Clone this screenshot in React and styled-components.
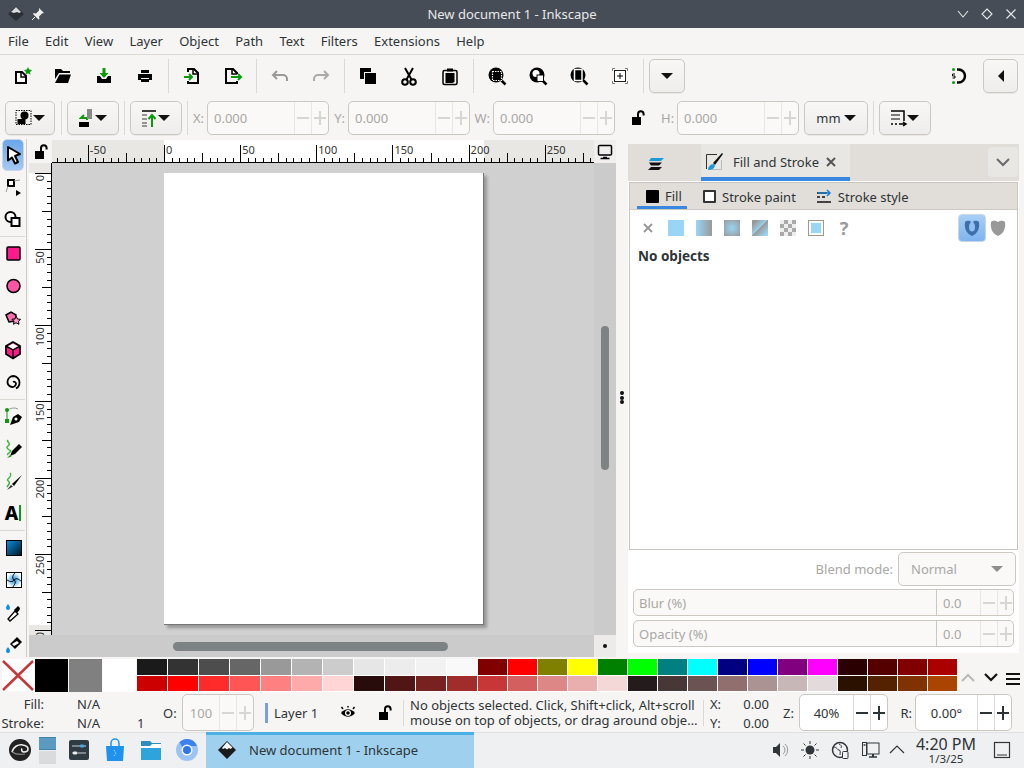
import React from "react";
import styled, { createGlobalStyle } from "styled-components";

const Global = createGlobalStyle`
  html, body { margin: 0; padding: 0; background: #f6f5f4; }
  body { font-family: "Noto Sans", sans-serif; font-size: 13px; color: #2e3436; overflow: hidden; }
  * { box-sizing: border-box; }
`;

const Page = styled.div`
  width: 1024px;
  height: 768px;
  display: flex;
  flex-direction: column;
  overflow: hidden;
`;

// window chrome
const TitleBar = styled.div`
  height: 28px;
  flex: none;
  background: #474d56;
  color: #e6e8ea;
  display: flex;
  align-items: center;
  padding: 0 6px;
`;
const TitleText = styled.div`
  flex: 1;
  text-align: center;
  padding-bottom: 1px;
`;
const TitleSide = styled.div`
  display: flex;
  align-items: center;
  gap: ${(p) => p.$gap || 4}px;
  width: 60px;
  justify-content: ${(p) => p.$end ? "flex-end" : "flex-start"};
`;

const MenuBar = styled.div`
  height: 27px;
  flex: none;
  display: flex;
  align-items: center;
  gap: 16.3px;
  padding: 1px 0 2px 8px;
  border-bottom: 1px solid #dcd9d5;
`;

const CmdBar = styled.div`
  height: 42px;
  flex: none;
  display: flex;
  align-items: center;
  padding: 0 6px 0 1.5px;
`;
const ToolBtn = styled.div`
  width: 41px;
  height: 34px;
  flex: none;
  display: flex;
  align-items: center;
  justify-content: center;
  margin-right: ${(p) => p.$mr || 0}px;
`;
const Sep = styled.div`
  width: 1px;
  height: 34px;
  flex: none;
  background: #dcd9d5;
  margin: 0 ${(p) => p.$m ?? 2.5}px;
`;
const Spacer = styled.div`
  flex: 1;
`;
const RaisedBtn = styled.div`
  width: ${(p) => p.$w}px;
  height: 34px;
  flex: none;
  display: flex;
  align-items: center;
  justify-content: center;
  gap: ${(p) => p.$gap ?? 4}px;
  margin-left: ${(p) => p.$ml || 0}px;
  border: 1px solid #cdc7c2;
  border-radius: 5px;
  background: linear-gradient(#f8f7f6, #efedeb);
  box-shadow: 0 1px 0 rgba(0, 0, 0, 0.05);
`;
const Caret = styled.div`
  width: 0;
  height: 0;
  flex: none;
  margin-left: ${(p) => p.$ml || 0}px;
  border-left: 6px solid transparent;
  border-right: 6px solid transparent;
  border-top: 6px solid ${(p) => p.$c || "#111"};
`;
const CaretLeft = styled.div`
  width: 0;
  height: 0;
  border-top: 6px solid transparent;
  border-bottom: 6px solid transparent;
  border-right: 6px solid #111;
`;

const ControlBar = styled.div`
  height: 42px;
  flex: none;
  display: flex;
  align-items: center;
  padding: 0 0 1px 5px;
`;
const FieldLabel = styled.div`
  flex: none;
  width: ${(p) => p.$w}px;
  color: ${(p) => p.$c || "#a9a7a4"};
  text-align: ${(p) => p.$right ? "right" : "left"};
  padding-right: ${(p) => p.$right ? 3 : 0}px;
`;
const Spin = styled.div`
  width: ${(p) => p.$w || 122}px;
  height: ${(p) => p.$h || 34}px;
  flex: none;
  display: flex;
  align-items: stretch;
  border: 1px solid #cdc7c2;
  border-radius: 5px;
  background: ${(p) => p.$on ? "#fff" : "#faf9f8"};
  color: ${(p) => p.$on ? "#2e3436" : "#a9a7a4"};
`;
const SpinValue = styled.div`
  flex: 1;
  display: flex;
  align-items: center;
  justify-content: ${(p) => p.$center ? "center" : "flex-start"};
  padding-left: ${(p) => p.$center ? 0 : 6}px;
`;
const SpinStep = styled.div`
  width: 17px;
  flex: none;
  position: relative;
  border-left: 1px solid ${(p) => p.$on ? "#dcd9d5" : "#e8e6e3"};
  &::before {
    content: "";
    position: absolute;
    left: 2px;
    right: 2px;
    top: calc(50% - 1px);
    height: 2px;
    background: ${(p) => p.$on ? "#2e3436" : "#d8d6d3"};
  }
  ${(p) => p.$plus && `
    &::after {
      content: "";
      position: absolute;
      top: calc(50% - 7px);
      bottom: calc(50% - 7px);
      left: calc(50% - 1px);
      width: 2px;
      background: ${p.$on ? "#2e3436" : "#d8d6d3"};
    }
  `}
`;
const LockSlot = styled.div`
  width: 46px;
  flex: none;
  display: flex;
  justify-content: center;
`;

// main area
const Main = styled.div`
  height: 518px;
  flex: none;
  display: flex;
  align-items: stretch;
`;
const Toolbox = styled.div`
  width: 27px;
  flex: none;
  border-right: 1px solid #cdc9c4;
  display: flex;
  flex-direction: column;
  overflow: hidden;
  padding-right: 1px;
`;
const BoxBtn = styled.div`
  height: 32px;
  flex: none;
  margin: 0 1px 0 2px;
  display: flex;
  align-items: center;
  justify-content: center;
  border-radius: 5px;
  ${(p) => p.$on && `
    background: linear-gradient(#6aa7ea, #a6c9f2);
    border: 1px solid #c9d6e4;
  `}
`;
const BoxSep = styled.div`
  height: 1px;
  margin: 1px 0;
  flex: none;
  background: #dcd9d5;
`;
const CanvasGrid = styled.div`
  width: 587px;
  flex: none;
  margin: 1px 0 0 2px;
  display: grid;
  grid-template-columns: 23px 542px 22px;
  grid-template-rows: 23px 472px 22px;
`;
const Corner = styled.div`
  background: ${(p) => p.$bg || "#f5f4f3"};
  display: flex;
  align-items: center;
  justify-content: center;
`;
const Ruler = styled.svg`
  display: block;
`;
const Canvas = styled.div`
  background: #d0d0d0;
  padding: 10px 0 0 112px;
  overflow: hidden;
`;
const Sheet = styled.div`
  width: 320px;
  height: 452px;
  background: #fff;
  border-right: 1px solid #777;
  border-bottom: 1px solid #777;
  box-shadow: 3px 3px 3px rgba(0, 0, 0, 0.28);
`;
const VScroll = styled.div`
  background: #cbcbcb;
  padding: 163px 0 0 7px;
`;
const VThumb = styled.div`
  width: 8px;
  height: 144px;
  border-radius: 4px;
  background: #7d8282;
`;
const HScroll = styled.div`
  grid-column: 1 / 3;
  background: #cbcbcb;
  padding: 7px 0 0 144px;
`;
const HThumb = styled.div`
  width: 275px;
  height: 9px;
  border-radius: 5px;
  background: #7d8282;
`;
const Dot = styled.div`
  width: 4px;
  height: 4px;
  border-radius: 50%;
  background: #111;
`;
const Handle = styled.div`
  width: 12px;
  flex: none;
  display: flex;
  flex-direction: column;
  align-items: center;
  justify-content: flex-start;
  gap: 0.5px;
  padding-top: 252px;
`;

// dialog panel
const Panel = styled.div`
  width: 391px;
  flex: none;
  margin-top: 5px;
  height: 509px;
  background: #fff;
  display: flex;
  flex-direction: column;
`;
const DockTabs = styled.div`
  height: 37px;
  flex: none;
  background: #e1ded9;
  display: flex;
  align-items: stretch;
`;
const DockTab = styled.div`
  width: ${(p) => p.$w}px;
  flex: none;
  display: flex;
  align-items: center;
  gap: 7px;
  white-space: nowrap;
  padding-left: ${(p) => p.$active ? 1 : 16}px;
  ${(p) => p.$active && `
    background: #e9e7e4;
    border-bottom: 4px solid #3a87e0;
    padding-top: 2px;
  `}
`;
const TabClose = styled.div`
  margin-left: -1px;
  display: flex;
`;
const DockMenu = styled.div`
  width: 30px;
  height: 30px;
  margin: 3px 1px 0 auto;
  border-radius: 4px;
  background: #e9e7e4;
  display: flex;
  align-items: center;
  justify-content: center;
`;
const Frame = styled.div`
  height: 368px;
  flex: none;
  margin: 1px 1px 0 1px;
  border: 1px solid #c9c5be;
  display: flex;
  flex-direction: column;
`;
const SubTabs = styled.div`
  height: 27px;
  flex: none;
  background: #e1ded9;
  border-bottom: 1px solid #cdc9c3;
  display: flex;
  align-items: stretch;
  padding-left: 7px;
  gap: 16px;
`;
const SubTab = styled.div`
  display: flex;
  align-items: center;
  gap: 6px;
  padding: 1px 0 0 ${(p) => p.$pad || 0}px;
  width: ${(p) => p.$w || "auto"};
  ${(p) => p.$active && "border-bottom: 3px solid #3a87e0; padding-top: 3px;"}
`;
const ColorChip = styled.div`
  width: 13px;
  height: 13px;
  flex: none;
  background: ${(p) => p.$fill ? "#000" : "#fff"};
  border: ${(p) => p.$fill ? "0" : "2px solid #333"};
  border-radius: 1px;
`;
const PaintRow = styled.div`
  height: 35px;
  flex: none;
  display: flex;
  align-items: center;
  padding: 1px 7px 0 9px;
`;
const PaintSlot = styled.div`
  width: 28px;
  height: 16px;
  flex: none;
  display: flex;
  align-items: center;
  justify-content: center;
  color: #999;
  font-weight: 700;
  font-size: 18px;
`;
const NoneSlot = styled.div`
  width: 23px;
  flex: none;
  padding-left: 3px;
`;
const PaintChip = styled.div`
  width: 16px;
  height: 16px;
  background: ${(p) => p.$bg};
  ${(p) => p.$framed && "border: 1px solid #999; box-shadow: inset 0 0 0 2px #fff;"}
`;
const RuleBtn = styled.div`
  width: 28px;
  height: 28px;
  flex: none;
  margin-left: auto;
  border-radius: 4px;
  border: 1px solid #c9d6e4;
  background: linear-gradient(#a8cff6, #7eb4ee);
  display: flex;
  align-items: center;
  justify-content: center;
`;
const RuleSlot = styled.div`
  width: 24px;
  flex: none;
  display: flex;
  justify-content: flex-end;
`;
const NoObjects = styled.div`
  font-weight: 700;
  font-size: 13.5px;
  padding: 2px 0 0 8px;
`;
const BlendRow = styled.div`
  height: 34px;
  flex: none;
  margin-top: 2px;
  display: flex;
  align-items: center;
  justify-content: flex-end;
  gap: 5px;
  padding-right: 3px;
  color: #a9a7a4;
`;
const Select = styled.div`
  width: 118px;
  height: 34px;
  border: 1px solid #cdc7c2;
  border-radius: 5px;
  background: #faf9f8;
  display: flex;
  align-items: center;
  justify-content: space-between;
  padding: 0 12px;
`;
const SliderRow = styled.div`
  height: 27px;
  flex: none;
  margin: ${(p) => p.$first ? 3 : 4}px 5px 0 5px;
  border: 1px solid #cdc7c2;
  border-radius: 5px;
  background: #faf9f8;
  display: flex;
  color: #a9a7a4;
`;
const SliderName = styled.div`
  width: 303px;
  flex: none;
  border-right: 1px solid #cdc7c2;
  display: flex;
  align-items: center;
  padding-left: 5px;
`;
const SliderValue = styled.div`
  width: 43px;
  flex: none;
  display: flex;
  align-items: center;
  padding-left: 6px;
`;

// palette
const PaletteBar = styled.div`
  height: 35px;
  flex: none;
  display: flex;
  padding: 2px 0 0 2px;
`;
const BigSwatch = styled.div`
  width: ${(p) => p.$w}px;
  height: 33px;
  flex: none;
  background: ${(p) => p.$c};
  margin-left: ${(p) => p.$ml ?? 1}px;
`;
const SwatchGrid = styled.div`
  margin-left: 1px;
  display: grid;
  grid-template-columns: repeat(11, 31px) repeat(16, 30px);
  grid-template-rows: 16.5px 16.5px;
  flex: none;
`;
const Swatch = styled.div`
  border-right: 1px solid #fff;
  border-bottom: 1px solid #fff;
  background: ${(p) => p.$c};
`;
const PaletteTools = styled.div`
  flex: 1;
  display: flex;
  align-items: center;
  padding-top: 6px;
`;
const PaletteTool = styled.div`
  width: ${(p) => p.$w}px;
  flex: none;
  display: flex;
  justify-content: center;
  margin-top: ${(p) => p.$t || 0}px;
`;

// status bar
const StatusBar = styled.div`
  height: 40px;
  flex: none;
  display: flex;
  align-items: center;
  padding-top: 1px;
  white-space: nowrap;
`;
const StyleGrid = styled.div`
  width: 163px;
  flex: none;
  margin-top: 2px;
  display: grid;
  grid-template-columns: 44px 33px 60px 1fr;
  grid-template-rows: 19px 19px;
  align-items: center;
`;
const RightText = styled.div`
  text-align: right;
`;
const LayerMark = styled.div`
  width: 3px;
  height: 20px;
  margin: 0 6px 0 11px;
  background: #7a9fd0;
  flex: none;
`;
const LayerName = styled.div`
  width: 60px;
  flex: none;
`;
const StatusIcon = styled.div`
  width: ${(p) => p.$w}px;
  flex: none;
  padding-left: ${(p) => p.$pl || 0}px;
  display: flex;
  justify-content: center;
`;
const Message = styled.div`
  width: 299px;
  flex: none;
  line-height: 15px;
  padding-left: 6px;
`;
const VLine = styled.div`
  width: 1px;
  height: 26px;
  flex: none;
  background: #dcd9d5;
`;
const Coords = styled.div`
  width: 79px;
  flex: none;
  margin-top: 2px;
  display: grid;
  grid-template-columns: 31px 28px;
  grid-template-rows: 19px 19px;
  padding-left: 6px;
  align-items: center;
`;

// task bar
const TaskBar = styled.div`
  height: 36px;
  flex: none;
  background: #eff0f1;
  border-top: 1px solid #dfe0e1;
  display: flex;
  align-items: center;
  padding-bottom: 1px;
`;
const TaskIcon = styled.div`
  width: ${(p) => p.$w || 36}px;
  flex: none;
  display: flex;
  justify-content: center;
  margin-left: ${(p) => p.$ml || 0}px;
`;
const Pager = styled.div`
  width: 17px;
  margin-right: 4px;
  flex: none;
  display: flex;
  flex-direction: column;
  gap: 1px;
`;
const PagerDesk = styled.div`
  height: 13px;
  background: ${(p) => p.$on ? "#5b9bc0" : "#d9dbdc"};
  border-top: ${(p) => p.$on ? "1px solid #3f84ad" : "0"};
  border-bottom: ${(p) => p.$on ? "1px solid #3f84ad" : "0"};
`;
const TaskItem = styled.div`
  width: 268px;
  height: 36px;
  flex: none;
  align-self: flex-start;
  margin: -1px 0 0 1px;
  background: #9fd1ee;
  border-top: 3px solid #4db0e4;
  display: flex;
  align-items: center;
  gap: 10px;
  padding: 0 0 3px 9px;
  color: #2e3436;
`;
const Clock = styled.div`
  width: 68px;
  margin-left: 2px;
  flex: none;
  display: flex;
  flex-direction: column;
  align-items: center;
  line-height: 1;
`;
const ClockTime = styled.div`
  font-size: 16px;
`;
const ClockDate = styled.div`
  font-size: 11.5px;
  margin-top: 1px;
`;

const Ic = styled.svg`
  display: block;
  flex: none;
`;
const I = ({ s = 24, children }) => (
  <Ic width={s} height={s} viewBox={`0 0 ${s} ${s}`}>{children}</Ic>
);

const G = "#0a9a0a";
const PK = "#ff1a8c";

const icons = {
  new: <I><path d="M6 8h6l4 4v7H6z" fill="#fff" stroke="#000" strokeWidth="2" /><path d="M11 8v5h5" fill="none" stroke="#000" strokeWidth="1.5" /><path d="M18 3l1.2 2.6 2.8.3-2 2 .5 2.8-2.5-1.4-2.500 1.400.5-2.800-2-2 2.800-.3z" fill={G} /></I>,
  open: <I><path d="M4 5h6l2 2h7v2H8L4 15z" fill="#000" /><path d="M8.500 10.500H20l-3 8.500H4z" fill="#000" /></I>,
  save: <I><path d="M10.500 4h3v5h3L12 14 7.500 9h3z" fill={G} /><path d="M5 12h3l2 3h4l2-3h3v7H5z" fill="#000" /></I>,
  print: <I><path d="M8 6h8v3H8z" fill="#000" /><path d="M5 10h14v6h-3v-2H8v2H5z" fill="#000" /><path d="M8 15h8v3H8z" fill="#000" /></I>,
  import: <I><path d="M8 8V5h6l4 4v10H8v-2" fill="none" stroke="#000" strokeWidth="2" /><path d="M13 5v5h5" fill="none" stroke="#000" strokeWidth="1.500" /><path d="M4 13h7M9 10l3 3-3 3" fill="none" stroke={G} strokeWidth="2" /></I>,
  export: <I><path d="M16 10V9l-4-4H5v14h11v-2" fill="none" stroke="#000" strokeWidth="2" /><path d="M11 5v5h5" fill="none" stroke="#000" strokeWidth="1.500" /><path d="M10 13h9M17 10l3 3-3 3" fill="none" stroke={G} strokeWidth="2" /></I>,
  undo: <I><path d="M9 7l-4 4 4 4M5.500 11H15a4 4 0 0 1 4 4v2" fill="none" stroke="#999" strokeWidth="2" /></I>,
  redo: <I><path d="M15 7l4 4-4 4M18.500 11H9a4 4 0 0 0-4 4v2" fill="none" stroke="#aaa" strokeWidth="2" /></I>,
  dup: <I><rect x="4" y="4" width="11" height="11" fill="#000" /><rect x="8.500" y="8.500" width="12" height="12" fill="#000" stroke="#f6f5f4" /></I>,
  cut: <I><circle cx="8" cy="18" r="2.800" fill="none" stroke="#000" strokeWidth="2" /><circle cx="16" cy="18" r="2.800" fill="none" stroke="#000" strokeWidth="2" /><path d="M9.500 15.500L16 4M14.500 15.500L8 4" stroke="#000" strokeWidth="2" fill="none" /></I>,
  paste: <I><rect x="5" y="6.500" width="14" height="14" rx="1.500" fill="none" stroke="#000" strokeWidth="1.500" /><path d="M7.500 9h9v9l-2 1h-7z" fill="#000" /><rect x="9" y="4.500" width="6" height="3" fill="#000" /></I>,
  zsel: <I><circle cx="11" cy="11" r="7.500" fill="#000" /><path d="M16 16l4.500 4.500" stroke="#000" strokeWidth="2.500" /><rect x="7.500" y="7.500" width="9" height="9" fill="none" stroke="#fff" strokeWidth="1.200" strokeDasharray="1.500 1" /></I>,
  zdraw: <I><circle cx="11" cy="11" r="7.500" fill="#000" /><path d="M16 16l4.500 4.500" stroke="#000" strokeWidth="2.500" /><circle cx="10" cy="9.500" r="3.500" fill="#fff" /><rect x="11" y="11" width="6.500" height="6.500" fill="#fff" stroke="#000" /></I>,
  zpage: <I><circle cx="11" cy="11" r="7.500" fill="#000" /><path d="M16 16l4.500 4.500" stroke="#000" strokeWidth="2.500" /><rect x="7.500" y="5.500" width="7.500" height="11" fill="none" stroke="#fff" strokeWidth="1.500" /></I>,
  center: <I><rect x="6.500" y="6.500" width="11" height="11" fill="#fff" stroke="#222" /><path d="M12 9v6M9 12h6" stroke="#000" /><path d="M4.500 7V4.500H7M17 4.500h2.500V7M19.500 17v2.500H17M7 19.500H4.500V17" fill="none" stroke="#777" /></I>,
  snap: <I><path d="M11 5.500h1.500a6.500 6.500 0 0 1 0 13H11" fill="none" stroke="#000" strokeWidth="2.400" /><circle cx="7.500" cy="5.500" r="1.500" fill={G} /><circle cx="7.500" cy="18.500" r="1.500" fill={G} /><path d="M9 10H6.500v2H9v2H6.500" fill="none" stroke="#000" /></I>,
  selsame: <I><g transform="translate(-1.500 0)"><rect x="2.500" y="4.500" width="15" height="14" fill="none" stroke="#000" strokeDasharray="1.500 1" /><circle cx="11" cy="9.500" r="4" fill="#000" /><rect x="4" y="13" width="8" height="5" fill="#000" /></g></I>,
  pattern: <I><g transform="translate(-3 0)"><path d="M8 9l-3 3h6v2" fill="none" stroke={G} strokeWidth="2" /><rect x="11" y="3" width="5" height="10" fill="#888" /><rect x="3" y="16" width="10" height="5" fill="#000" /></g></I>,
  order: <I><g transform="translate(-4 0)"><path d="M4 5h14" stroke="#000" strokeWidth="1.500" /><path d="M4 9h5M4 13h5M4 17h5M4 20h5" stroke="#777" strokeWidth="1.500" /><path d="M14 21V10M10.500 13l3.500-4 3.500 4" fill="none" stroke={G} strokeWidth="2" /></g></I>,
  lock: <I><rect x="6" y="11" width="9" height="8" fill="#000" /><path d="M12 11V8a2.800 2.800 0 0 1 5.600 0v1.500" fill="none" stroke="#000" strokeWidth="2" /></I>,
  transform: <I><g transform="translate(-4 0)"><path d="M4 5h13v10" fill="none" stroke="#000" strokeWidth="1.500" /><path d="M4 9h9M4 13h9" stroke="#555" strokeWidth="1.500" /><path d="M4 18h2M8 18h2M12 18h6M16 16l3 2-3 2" fill="none" stroke="#000" strokeWidth="1.500" /></g></I>,
  monitor: <I s={16}><rect x="1.500" y="1.500" width="13" height="9.500" rx="1" fill="none" stroke="#000" strokeWidth="1.500" /><path d="M6 13.500h4M3.500 14.500h9" stroke="#000" strokeWidth="1.500" /></I>,
  node: <I><rect x="7" y="5" width="6" height="6" fill="#fff" stroke="#000" strokeWidth="2" /><path d="M13 6l6-1M7 11l-2 6" stroke="#999" fill="none" /><path d="M15 15l5 3-5 3z" fill="#000" /></I>,
  shape: <I><circle cx="9.500" cy="10" r="5" fill="#fff" stroke="#000" strokeWidth="2" /><rect x="10.500" y="11" width="8" height="8" fill="#fff" stroke="#000" strokeWidth="2" /></I>,
  rect: <I><rect x="6" y="5" width="13" height="13" rx="1" fill={PK} stroke="#000" strokeWidth="1.500" /></I>,
  circle: <I><circle cx="12.500" cy="12" r="6.500" fill="#ff55a5" stroke="#000" strokeWidth="1.500" /></I>,
  star: <I><path d="M5 9l5-3 5 3-1 6-6 1z" fill="#ff69ad" stroke="#000" strokeWidth="1.500" /><path d="M15 10l1.500 3 3 .3-2 2 .5 3-3-1.500-2.500 1.500.5-3-2-2 3-.3z" fill="#ff99c8" stroke="#000" /></I>,
  cube: <I><path d="M12 4l7 4v8l-7 4.500L5 16V8z" fill={PK} stroke="#000" strokeWidth="1.800" /><path d="M5 8l7 4 7-4M12 12v8" fill="none" stroke="#000" strokeWidth="1.500" /><path d="M12 5.500l5 2.800-5 2.800-5-2.800z" fill="#fff" /></I>,
  spiral: <I><path d="M12 12a2 2 0 0 1 3 1.500 3.500 3.500 0 0 1-4 3.500 5 5 0 0 1-4.500-5.500A6 6 0 0 1 12.500 6a6.500 6.500 0 0 1 6 6.500c0 3-1.500 5-3.500 6" fill="none" stroke="#000" strokeWidth="1.800" /></I>,
  pen: <I><path d="M6 6a9 9 0 0 1 11-2" fill="none" stroke="#999" /><path d="M6 6v10" stroke={G} /><circle cx="6" cy="5" r="2" fill={G} /><rect x="4" y="14" width="4" height="4" fill={G} /><path d="M9 20l3-8 5-3 4 3-3 5z" fill="#000" /><circle cx="15" cy="14" r="1.500" fill="#fff" /></I>,
  pencil: <I><path d="M7 3c-2 2 3 3 1 5s-3 2-1 4 4 1 2 3-3 2-2 3" fill="none" stroke="#3fb83f" strokeWidth="1.500" /><path d="M9 19l2-5 7-7 3 3-7 7z" fill="#000" /><path d="M6 21l3-3 1.500 1.500z" fill={G} /></I>,
  callig: <I><path d="M9 4c2 2 0 4-2 6s3 2 1 5-2 3-2 3" fill="none" stroke="#3fb83f" strokeWidth="1.500" /><path d="M11 15L21 6l-8 11z" fill="#000" /><path d="M6 21l4-5 2 1.500z" fill="#333" /></I>,
  grad: <I><defs><linearGradient id="gt" x1="0" y1="0" x2="1" y2="1"><stop offset="0" stopColor="#0d8fe0" /><stop offset="1" stopColor="#001522" /></linearGradient></defs><rect x="5.500" y="4.500" width="15" height="15" fill="url(#gt)" stroke="#000" /></I>,
  mesh: <I><defs><radialGradient id="gm"><stop offset="0" stopColor="#0d8fe0" /><stop offset="1" stopColor="#fff" /></radialGradient></defs><rect x="5.500" y="4.500" width="15" height="15" fill="url(#gm)" stroke="#000" /><path d="M13 12C10 9 13 6 14 5M13 12c3-3 5 0 7 1M13 12c3 2 0 5-1 7M13 12c-2 3-5 1-7 0" fill="none" stroke="#000" /></I>,
  dropper: <I><path d="M7 4c-1.500 2-2 3-2 4a2 2 0 0 0 4 0c0-1-.500-2-2-4z" fill="#0d8fe0" /><path d="M8 20l-1-1 7-8 3 3-8 7z" fill="#fff" stroke="#000" strokeWidth="1.300" /><path d="M13 10l4-4 2 2-.5 2-2.500 3z" fill="#000" /></I>,
  bucket: <I><path d="M9 12l7-7 5 5-7 7z" fill="#000" /><path d="M11 12l5-3 2 2-5 3z" fill="#fff" /><path d="M7 15c-1.500 2-2 3-2 4a2 2 0 0 0 4 0c0-1-.500-2-2-4z" fill="#0d8fe0" /></I>,
  eye: <I><path d="M5 12c4-5 10-5 14 0-4 5-10 5-14 0z" fill="#000" /><circle cx="12" cy="12" r="3" fill="#fff" /><circle cx="12" cy="12" r="1.800" fill="#000" /><path d="M7 8L5.500 6M12 6.500V5M17 8l1.500-2" stroke="#000" strokeWidth="1.500" /></I>,
  chev: <I s={16}><path d="M2 10l6-6 6 6" fill="none" stroke="#bbb" strokeWidth="2.200" /></I>,
  chevDown: <I s={16}><path d="M2 5l6 6 6-6" fill="none" stroke="#111" strokeWidth="2.200" /></I>,
  burger: <I s={16}><path d="M1 3h14M1 8h14M1 13h14" stroke="#111" strokeWidth="2" /></I>,
  dockMenu: <I s={16}><path d="M2 5l6 6 6-6" fill="none" stroke="#6a6a6a" strokeWidth="2" /></I>,
  layers: <I><path d="M7 7h13l-3 3H5z" fill="#1a9ad6" /><path d="M5 12h13l-3 3H7z" fill="#111" transform="translate(0 -.5)" /><path d="M7 16h11l-3 3H4z" fill="#111" /></I>,
  brush: <I><path d="M15 4.500H4.500V19" fill="none" stroke="#333" /><path d="M19.500 10v9.500H8" fill="none" stroke="#bbb" /><path d="M11 13L20 3l1 1-8 11z" fill="#111" /><path d="M6 20c0-3 2-6 6-6l1 2c-1 3-4 4-7 4z" fill="#1a9ad6" /></I>,
  close: <I s={12}><path d="M2 2l8 8M10 2l-8 8" stroke="#555" strokeWidth="2" /></I>,
  strokeStyle: <I s={16}><path d="M1 4h10M1 8h3M6 8h3M1 13h14" stroke="#111" strokeWidth="1.500" /><path d="M2 5h12M11 2l3 3-3 3" transform="translate(0 -1)" fill="none" stroke="#1a7fd0" strokeWidth="1.500" /></I>,
  grayX: <I s={12}><path d="M2 2l8 8M10 2l-8 8" stroke="#999" strokeWidth="2" /></I>,
  ruleEven: <I><path d="M5 6c3-2 5-1 7 0 2-1 4-2 7 0 1 7-2 12-7 14C7 18 4 13 5 6z" fill="#3d6fa8" /><ellipse cx="12" cy="11" rx="3" ry="4.500" fill="#93bfef" /><path d="M10.500 5h3v3h-3z" fill="#93bfef" /></I>,
  ruleNz: <I><path d="M5 6c3-2 5-1 7 0 2-1 4-2 7 0 1 7-2 12-7 14C7 18 4 13 5 6z" fill="#999" /></I>,
  none: <I s={32}><rect width="32" height="33" fill="#fff" /><path d="M1 2l30 29M31 2L1 31" stroke="#c83737" strokeWidth="2.500" /></I>,
  chevTray: <I s={16}><path d="M1 11l7-7 7 7" fill="none" stroke="#31363b" strokeWidth="1.200" /></I>,
  titleChevD: <I s={14}><path d="M2 4l5 6 5-6" fill="none" stroke="#e6e8ea" strokeWidth="1.100" /></I>,
  titleDiamond: <I s={14}><path d="M7 2l5 5-5 5-5-5z" fill="none" stroke="#e6e8ea" strokeWidth="1.100" /></I>,
  titleX: <I s={14}><path d="M2.500 2.500l9 9M11.500 2.500l-9 9" fill="none" stroke="#e6e8ea" strokeWidth="1.100" /></I>,
  titleLogo: <I s={20}><path d="M10 2l8 8-8 7-8-7z" fill="#2b2f35" /><path d="M10 3l5 5-2 1-2-1-3 1-3-1z" fill="#d8dadc" /></I>,
  pin: <I s={16}><path d="M9 2l5 5-2 .5-3 3 .5 2.500-1 .5L3 8l.5-1L6 7.500l3-3z" fill="#eee" /><path d="M5 11l-3 3" stroke="#eee" /></I>,
  opensuse: <I><circle cx="12" cy="12" r="11" fill="#222" /><path d="M4 14c1-5 6-8 11-7 3 .5 5 2 5 4 0 2-2 3-4 3s-3-2-2-3.500" fill="none" stroke="#eee" strokeWidth="1.600" /><path d="M4 14c3 2 8 3 13 2" fill="none" stroke="#888" strokeWidth="1.200" /></I>,
  settings: <I><rect x="2" y="2" width="20" height="20" rx="2" fill="#2f3b43" /><path d="M5 8h14M5 15h14" stroke="#ccd" /><rect x="13" y="6.500" width="4" height="3" rx="1" fill="#3daee9" /><rect x="6" y="13.500" width="4" height="3" rx="1" fill="#eee" /></I>,
  store: <I><path d="M3 8h18l-1 15H4z" fill="#1e92ec" /><path d="M8 8V5a4 4 0 0 1 8 0v3" fill="none" stroke="#1e92ec" strokeWidth="1.500" /><path d="M11 12l2 3-2 3" fill="none" stroke="#cfe8fb" strokeDasharray="1 1" /></I>,
  files: <I><path d="M2 3h9l2 2h9v17H2z" fill="#2c8ec0" /><path d="M2 8h9l2-2h9v5H2z" fill="#fff" /><path d="M2 10h20v12H2z" fill="#2fa3dc" /></I>,
  chrome: <I><circle cx="12" cy="12" r="11" fill="#9cc3f5" /><path d="M12 1a11 11 0 0 1 10 7H12a4 4 0 0 0-4 2L4.500 4.500A11 11 0 0 1 12 1z" fill="#3b82f0" /><circle cx="12" cy="12" r="5.500" fill="#fff" /><circle cx="12" cy="12" r="4" fill="#2f76e6" /></I>,
  inkscape: <I><path d="M12 3l9 9-9 9-9-9z" fill="#1a1a1a" /><path d="M12 4l5.500 5.500-2 1.500-1.500-1-2 1.500-2-1.500-2 1-1-1z" fill="#f4f4f4" /></I>,
  speaker: <I><path d="M5 9h3l4-4v14l-4-4H5z" fill="#31363b" /><path d="M15 8a5 5 0 0 1 0 8M17 6a8 8 0 0 1 0 12" fill="none" stroke="#999" /></I>,
  sun: <I><circle cx="12" cy="12" r="4.500" fill="#31363b" /><path d="M12 3v3M12 18v3M3 12h3M18 12h3M5.500 5.500l2 2M16.500 16.500l2 2M5.500 18.500l2-2M16.500 7.500l2-2" stroke="#31363b" /></I>,
  globe: <I><circle cx="12" cy="12" r="7.500" fill="none" stroke="#31363b" strokeWidth="1.500" /><path d="M6 9c3 0 3 3 5 3s1 3 1 5M11 6c2 1 3 2 2 4" fill="none" stroke="#31363b" /><rect x="14.500" y="13.500" width="5.500" height="7" rx="1" fill="#eff0f1" stroke="#31363b" /></I>,
  network: <I><rect x="4.500" y="4.500" width="4" height="13" fill="none" stroke="#31363b" /><rect x="9" y="5" width="12" height="11" fill="none" stroke="#31363b" /><path d="M5.500 7h2M11 19h8" stroke="#31363b" strokeWidth="1.500" /><path d="M15 16v3" stroke="#31363b" strokeWidth="2" /></I>,
  desktop: <I><rect x="4.500" y="4.500" width="15" height="15" fill="none" stroke="#31363b" strokeWidth="1.200" /><path d="M7 17h10" stroke="#31363b" /></I>,
};

const rulerMarks = [-100, -50, 0, 50, 100, 150, 200, 250, 300];
const SCALE = 76.15 / 50;

const TopRuler = () => {
  const ticks = [];
  for (let u = -70; u <= 285; u += 5) {
    const x = 112 + u * SCALE;
    if (x < 0 || x > 542) continue;
    const h = u % 50 === 0 ? 17 : u % 25 === 0 ? 9 : 4;
    ticks.push(<path key={u} d={`M${Math.round(x) + 0.5} ${22 - h}V22`} stroke="#000" />);
  }
  return (
    <Ruler width="542" height="23">
      <rect width="542" height="23" fill="#e8e7e3" />
      <rect x="112" width="320" height="23" fill="#fff" />
      <path d="M0 22.500H542" stroke="#000" />
      {ticks}
      {rulerMarks.map((m) => {
        const x = 112 + m * SCALE;
        if (x < 0 || x > 530) return null;
        return <text key={m} x={x + 2} y="14" fontSize="11" fontFamily="Noto Sans" fill="#333">{m}</text>;
      })}
    </Ruler>
  );
};

const LeftRuler = () => {
  const ticks = [];
  for (let u = 0; u <= 305; u += 5) {
    const y = 10 + u * SCALE;
    if (y > 472) continue;
    const w = u % 50 === 0 ? 16 : u % 25 === 0 ? 9 : 4;
    ticks.push(<path key={u} d={`M${22 - w} ${Math.round(y) + 0.5}H22`} stroke="#000" />);
  }
  return (
    <Ruler width="23" height="472">
      <rect width="23" height="472" fill="#e8e7e3" />
      <rect y="10" width="23" height="452" fill="#fff" />
      <path d="M22.500 0V472" stroke="#000" />
      {ticks}
      {[0, 50, 100, 150, 200, 250, 300].map((m) => (
        <text key={m} transform={`translate(15 ${10 + m * SCALE + 2}) rotate(-90)`} textAnchor="end" fontSize="11" fontFamily="Noto Sans" fill="#333">{m}</text>
      ))}
    </Ruler>
  );
};

const colorsTop = ["#1a1a1a", "#333333", "#4d4d4d", "#666666", "#999999", "#b3b3b3", "#cccccc", "#e6e6e6", "#ececec", "#f2f2f2", "#f9f9f9", "#800000", "#ff0000", "#808000", "#ffff00", "#008000", "#00ff00", "#008080", "#00ffff", "#000080", "#0000ff", "#800080", "#ff00ff", "#2b0000", "#550000", "#800000", "#aa0000"];
const colorsBottom = ["#cc0000", "#ff0000", "#ff2a2a", "#ff5555", "#ff8080", "#ffaaaa", "#ffd5d5", "#280b0b", "#501616", "#782121", "#a02c2c", "#c83737", "#d35f5f", "#de8787", "#e9afaf", "#f4d7d7", "#241c1c", "#483737", "#6c5353", "#916f6f", "#ac9393", "#c8b7b7", "#e3dbdb", "#2b1100", "#552200", "#803300", "#aa4400"];

const menus = ["File", "Edit", "View", "Layer", "Object", "Path", "Text", "Filters", "Extensions", "Help"];
const toolboxGroups = [
  ["node", "shape"],
  ["rect", "circle", "star", "cube", "spiral"],
  ["pen", "pencil", "callig", "TEXT"],
  ["grad", "mesh", "dropper", "bucket"],
];

const paintChips = [
  { bg: "#99d5f5" },
  { bg: "linear-gradient(90deg, #99d5f5, #999)" },
  { bg: "radial-gradient(circle, #99d5f5, #999)" },
  { bg: "linear-gradient(135deg, #999 15%, #99d5f5 50%, #999 50%, #99d5f5 90%)" },
  { bg: "repeating-conic-gradient(#aaa 0 25%, #eee 0 50%) 0 0 / 8px 8px" },
  { bg: "#99d5f5", framed: true },
];

const TextGlyph = styled.div`
  display: flex;
  align-items: center;
  gap: 1px;
  font-weight: 800;
  font-size: 19px;
  color: #000;
  line-height: 1;
`;
const Cursor = styled.div`
  width: 2px;
  height: 16px;
  background: #0a9a0a;
`;

function SpinBox({ value, w, on, h, center }) {
  return (
    <Spin $w={w} $on={on} $h={h}>
      <SpinValue $center={center}>{value}</SpinValue>
      <SpinStep $on={on} />
      <SpinStep $on={on} $plus />
    </Spin>
  );
}

export default function App() {
  return (
    <Page>
      <Global />
      <TitleBar>
        <TitleSide>{icons.titleLogo}{icons.pin}</TitleSide>
        <TitleText>New document 1 - Inkscape</TitleText>
        <TitleSide $end $gap={10}>{icons.titleChevD}{icons.titleDiamond}{icons.titleX}</TitleSide>
      </TitleBar>

      <MenuBar>
        {menus.map((m) => <div key={m}>{m}</div>)}
      </MenuBar>

      <CmdBar>
        {["new", "open", "save", "print"].map((k) => <ToolBtn key={k}>{icons[k]}</ToolBtn>)}
        <Sep />
        {["import", "export"].map((k) => <ToolBtn key={k}>{icons[k]}</ToolBtn>)}
        <Sep />
        {["undo", "redo"].map((k) => <ToolBtn key={k}>{icons[k]}</ToolBtn>)}
        <Sep />
        {["dup", "cut", "paste"].map((k) => <ToolBtn key={k}>{icons[k]}</ToolBtn>)}
        <Sep />
        {["zsel", "zdraw", "zpage", "center"].map((k) => <ToolBtn key={k}>{icons[k]}</ToolBtn>)}
        <Sep />
        <RaisedBtn $w={36} $ml={2}><Caret /></RaisedBtn>
        <Spacer />
        <ToolBtn $mr={5}>{icons.snap}</ToolBtn>
        <RaisedBtn $w={35}><CaretLeft /></RaisedBtn>
      </CmdBar>

      <ControlBar>
        <RaisedBtn $w={50} $gap={-6}>{icons.selsame}<Caret $ml={-6} /></RaisedBtn>
        <Sep $m={5.5} />
        <RaisedBtn $w={52} $gap={0}>{icons.pattern}<Caret $ml={-8} /></RaisedBtn>
        <Sep $m={5} />
        <RaisedBtn $w={52} $gap={0}>{icons.order}<Caret $ml={-8} /></RaisedBtn>
        <Sep $m={5} />
        <FieldLabel $w={14}>X:</FieldLabel>
        <SpinBox value="0.000" />
        <FieldLabel $w={19} $right>Y:</FieldLabel>
        <SpinBox value="0.000" />
        <FieldLabel $w={23} $right>W:</FieldLabel>
        <SpinBox value="0.000" />
        <LockSlot>{icons.lock}</LockSlot>
        <FieldLabel $w={16}>H:</FieldLabel>
        <SpinBox value="0.000" />
        <RaisedBtn $w={64} $gap={3} $ml={5}>mm <Caret /></RaisedBtn>
        <Sep $m={5} />
        <RaisedBtn $w={52} $gap={0}>{icons.transform}<Caret $ml={-8} /></RaisedBtn>
      </ControlBar>

      <Main>
        <Toolbox>
          <BoxBtn $on>
            <I><path d="M7 4l12 7-5 2 3 6-3 1.500-3-6-4 3z" fill="#fff" stroke="#000" strokeWidth="2" strokeLinejoin="round" /></I>
          </BoxBtn>
          {toolboxGroups.map((group, i) => (
            <React.Fragment key={i}>
              {i > 0 && <BoxSep />}
              {group.map((k) => (
                <BoxBtn key={k}>
                  {k === "TEXT" ? <TextGlyph>A<Cursor /></TextGlyph> : icons[k]}
                </BoxBtn>
              ))}
            </React.Fragment>
          ))}
        </Toolbox>

        <CanvasGrid>
          <Corner>{icons.lock}</Corner>
          <TopRuler />
          <Corner $bg="#f0efed">{icons.monitor}</Corner>
          <LeftRuler />
          <Canvas><Sheet /></Canvas>
          <VScroll><VThumb /></VScroll>
          <HScroll><HThumb /></HScroll>
          <Corner $bg="#ecebe9"><Dot /></Corner>
        </CanvasGrid>

        <Handle>
          <Dot /><Dot /><Dot />
        </Handle>

        <Panel>
          <DockTabs>
            <DockTab $w={73}>{icons.layers}</DockTab>
            <DockTab $w={149} $active>
              {icons.brush}
              <span>Fill and Stroke</span>
              <TabClose>{icons.close}</TabClose>
            </DockTab>
            <DockMenu>{icons.dockMenu}</DockMenu>
          </DockTabs>
          <Frame>
            <SubTabs>
              <SubTab $active $pad={9} $w="50px"><ColorChip $fill />Fill</SubTab>
              <SubTab><ColorChip />Stroke paint</SubTab>
              <SubTab $pad={4}>{icons.strokeStyle}Stroke style</SubTab>
            </SubTabs>
            <PaintRow>
              <NoneSlot>{icons.grayX}</NoneSlot>
              {paintChips.map((c, i) => (
                <PaintSlot key={i}><PaintChip $bg={c.bg} $framed={c.framed} /></PaintSlot>
              ))}
              <PaintSlot>?</PaintSlot>
              <RuleBtn>{icons.ruleEven}</RuleBtn>
              <RuleSlot>{icons.ruleNz}</RuleSlot>
            </PaintRow>
            <NoObjects>No objects</NoObjects>
          </Frame>
          <BlendRow>
            Blend mode:
            <Select>Normal <Caret $c="#8e8e8c" /></Select>
          </BlendRow>
          <SliderRow $first>
            <SliderName>Blur (%)</SliderName>
            <SliderValue>0.0</SliderValue>
            <SpinStep />
            <SpinStep $plus />
          </SliderRow>
          <SliderRow>
            <SliderName>Opacity (%)</SliderName>
            <SliderValue>0.0</SliderValue>
            <SpinStep />
            <SpinStep $plus />
          </SliderRow>
        </Panel>
      </Main>

      <PaletteBar>
        {icons.none}
        <BigSwatch $w={33} $c="#000" />
        <BigSwatch $w={33} $c="#808080" />
        <BigSwatch $w={33} $c="#fff" />
        <SwatchGrid>
          {colorsTop.map((c, i) => <Swatch key={`t${i}`} $c={c} />)}
          {colorsBottom.map((c, i) => <Swatch key={`b${i}`} $c={c} />)}
        </SwatchGrid>
        <PaletteTools>
          <PaletteTool $w={20}>{icons.chev}</PaletteTool>
          <PaletteTool $w={26} $t={-4}>{icons.chevDown}</PaletteTool>
          <PaletteTool $w={17}>{icons.burger}</PaletteTool>
        </PaletteTools>
      </PaletteBar>

      <StatusBar>
        <StyleGrid>
          <RightText>Fill:</RightText><div /><div>N/A</div><div />
          <RightText>Stroke:</RightText><div /><div>N/A</div><div>1</div>
        </StyleGrid>
        <FieldLabel $w={19} $c="#2e3436">O:</FieldLabel>
        <SpinBox value="100" w={72} h={37} center />
        <LayerMark />
        <LayerName>Layer 1</LayerName>
        <StatusIcon $w={28}>{icons.eye}</StatusIcon>
        <StatusIcon $w={41} $pl={5}>{icons.lock}</StatusIcon>
        <VLine />
        <Message>
          <div>No objects selected. Click, Shift+click, Alt+scroll</div>
          <div>mouse on top of objects, or drag around obje…</div>
        </Message>
        <VLine />
        <Coords>
          <div>X:</div><RightText>0.00</RightText>
          <div>Y:</div><RightText>0.00</RightText>
        </Coords>
        <FieldLabel $w={16} $c="#2e3436">Z:</FieldLabel>
        <SpinBox value="40%" w={89} h={37} on center />
        <FieldLabel $w={27} $right $c="#2e3436">R:</FieldLabel>
        <SpinBox value="0.00°" w={97} h={37} on center />
      </StatusBar>

      <TaskBar>
        <TaskIcon $w={39}>{icons.opensuse}</TaskIcon>
        <Pager><PagerDesk $on /><PagerDesk /></Pager>
        <TaskIcon $w={36} $ml={1}>{icons.settings}</TaskIcon>
        <TaskIcon>{icons.store}</TaskIcon>
        <TaskIcon>{icons.files}</TaskIcon>
        <TaskIcon>{icons.chrome}</TaskIcon>
        <TaskItem>{icons.inkscape}New document 1 - Inkscape</TaskItem>
        <Spacer />
        <TaskIcon $w={30}>{icons.speaker}</TaskIcon>
        <TaskIcon $w={29}>{icons.sun}</TaskIcon>
        <TaskIcon $w={31}>{icons.globe}</TaskIcon>
        <TaskIcon $w={29}>{icons.network}</TaskIcon>
        <TaskIcon $w={26}>{icons.chevTray}</TaskIcon>
        <Clock><ClockTime>4:20 PM</ClockTime><ClockDate>1/3/25</ClockDate></Clock>
        <TaskIcon $w={44}>{icons.desktop}</TaskIcon>
      </TaskBar>
    </Page>
  );
}
